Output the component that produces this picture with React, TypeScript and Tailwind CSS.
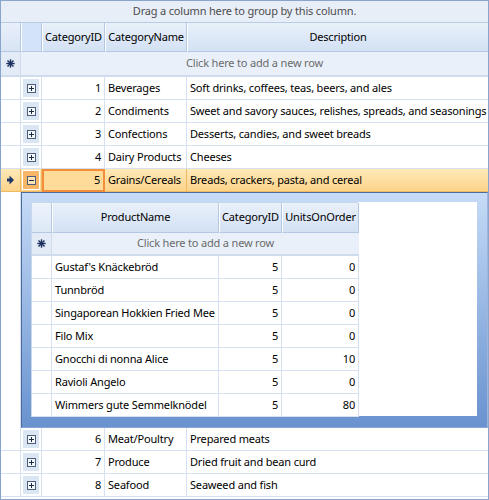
import React from 'react'

const categories = [
  { id: 1, name: 'Beverages', desc: 'Soft drinks, coffees, teas, beers, and ales' },
  { id: 2, name: 'Condiments', desc: 'Sweet and savory sauces, relishes, spreads, and seasonings' },
  { id: 3, name: 'Confections', desc: 'Desserts, candies, and sweet breads' },
  { id: 4, name: 'Dairy Products', desc: 'Cheeses' },
  { id: 5, name: 'Grains/Cereals', desc: 'Breads, crackers, pasta, and cereal' },
  { id: 6, name: 'Meat/Poultry', desc: 'Prepared meats' },
  { id: 7, name: 'Produce', desc: 'Dried fruit and bean curd' },
  { id: 8, name: 'Seafood', desc: 'Seaweed and fish' },
]

const products = [
  { name: "Gustaf's Knäckebröd", cat: 5, units: 0 },
  { name: 'Tunnbröd', cat: 5, units: 0 },
  { name: 'Singaporean Hokkien Fried Mee', cat: 5, units: 0 },
  { name: 'Filo Mix', cat: 5, units: 0 },
  { name: 'Gnocchi di nonna Alice', cat: 5, units: 10 },
  { name: 'Ravioli Angelo', cat: 5, units: 0 },
  { name: 'Wimmers gute Semmelknödel', cat: 5, units: 80 },
]

const mainCols = 'grid grid-cols-[20px_21px_63px_82px_1fr]'
const detailCols = 'grid grid-cols-[20px_167px_63px_77px] w-[327px]'

function Star() {
  return (
    <svg width="9" height="9" viewBox="0 0 9 9">
      <g stroke="#1c3160" strokeWidth="1.4" strokeLinecap="square">
        <line x1="4.5" y1="1" x2="4.5" y2="8" />
        <line x1="1" y1="4.5" x2="8" y2="4.5" />
        <line x1="2" y1="2" x2="7" y2="7" />
        <line x1="7" y1="2" x2="2" y2="7" />
      </g>
    </svg>
  )
}

function Arrow() {
  return (
    <svg width="7" height="10" viewBox="0 0 7 10">
      <polygon points="0,3.5 2.5,3.5 2.5,0.5 7,5 2.5,9.5 2.5,6.5 0,6.5" fill="#1f3767" />
    </svg>
  )
}

function ExpandBox({ open }: { open?: boolean }) {
  return (
    <svg width="9" height="9" viewBox="0 0 9 9">
      <rect x="0.5" y="0.5" width="8" height="8" fill={open ? '#fde3b8' : '#f4f8fd'} stroke="#4f5d78" />
      <line x1="2" y1="4.5" x2="7" y2="4.5" stroke="#1d2a44" />
      {!open && <line x1="4.5" y1="2" x2="4.5" y2="7" stroke="#1d2a44" />}
    </svg>
  )
}

function MainRow({ c, selected }: { c: (typeof categories)[number]; selected?: boolean }) {
  const line = selected ? 'border-[#f1b862]' : 'border-[#d5e1f1]'
  return (
    <div
      className={`${mainCols} h-[23px] ${
        selected ? 'bg-gradient-to-b from-[#fee9b8] to-[#fdd387]' : 'bg-white'
      }`}
    >
      <div className={`flex items-center justify-center border-r border-b ${line}`}>
        {selected && <Arrow />}
      </div>
      <div className={`border-r border-b ${line} p-px`}>
        <div
          className={`flex h-full items-center justify-center border border-white ${
            selected ? 'bg-[#f8b766]' : 'bg-[#dbe6f5]'
          }`}
        >
          <ExpandBox open={selected} />
        </div>
      </div>
      <div
        className={`flex items-center justify-end pr-[3px] ${
          selected ? 'border-2 border-[#f48e3a] bg-[#fddc9a]' : `border-r border-b ${line}`
        }`}
      >
        {c.id}
      </div>
      <div className={`flex items-center overflow-hidden whitespace-nowrap border-r border-b pl-[3px] ${line}`}>
        {c.name}
      </div>
      <div className={`flex items-center overflow-hidden whitespace-nowrap border-b pl-[3px] ${line}`}>
        {c.desc}
      </div>
    </div>
  )
}

function DetailGrid() {
  const hcell =
    'flex items-center justify-center border-r border-b border-[#b5c8e3] border-l border-l-white bg-gradient-to-b from-[#e9f0fa] to-[#d3e1f4]'
  return (
    <div className={`${detailCols} border-l border-t border-[#c9d7ea]`}>
      {/* header */}
      <div className="h-[30px] border-r border-b border-[#b5c8e3] bg-gradient-to-b from-[#edf3fb] to-[#dde8f6]" />
      <div className={hcell}>ProductName</div>
      <div className={hcell}>CategoryID</div>
      <div className={hcell}>UnitsOnOrder</div>
      {/* new row */}
      <div className="flex h-[23px] items-center justify-center border-r border-b-2 border-[#cfdcee] bg-[#e3ebf7]">
        <Star />
      </div>
      <div className="col-span-3 flex items-center justify-center border-b-2 border-[#cfdcee] bg-[#e9f0fa] text-[#6b6b6b]">
        Click here to add a new row
      </div>
      {products.map((p) => (
        <React.Fragment key={p.name}>
          <div className="h-[23px] border-r border-b border-[#d5e1f1]" />
          <div className="flex items-center overflow-hidden whitespace-nowrap border-r border-b border-[#d5e1f1] pl-[3px]">
            {p.name}
          </div>
          <div className="flex items-center justify-end border-r border-b border-[#d5e1f1] pr-[3px]">{p.cat}</div>
          <div className="flex items-center justify-end border-r border-b border-[#d5e1f1] pr-[3px]">{p.units}</div>
        </React.Fragment>
      ))}
    </div>
  )
}

export default function App() {
  const hcell =
    'flex items-center justify-center border-r border-b border-[#b5c8e3] border-l border-l-white bg-gradient-to-b from-[#e9f0fa] to-[#d3e1f4]'
  return (
    <div className="h-[500px] w-[489px] overflow-hidden border border-[#8aa5cb] bg-white font-['Noto_Sans',sans-serif] text-[11px] tracking-[-0.18px] text-black">
      {/* Group panel */}
      <div className="flex h-[22px] items-center justify-center border-b border-[#b8cbe5] bg-[#e8eef8] text-[#4d4d4d]">
        Drag a column here to group by this column.
      </div>

      {/* Header */}
      <div className={`${mainCols} h-[29px]`}>
        <div className="border-r border-b border-[#b5c8e3] bg-gradient-to-b from-[#e8effa] to-[#d8e4f4]" />
        <div className="border-r border-b border-[#b5c8e3] border-l border-l-white bg-[#d4e4f8]" />
        <div className={hcell}>CategoryID</div>
        <div className={hcell}>CategoryName</div>
        <div className={`${hcell} border-r-0`}>Description</div>
      </div>

      {/* New row */}
      <div className={`${mainCols} h-[25px]`}>
        <div className="flex items-center justify-center border-r border-b-2 border-[#cfdcee] bg-[#e3ebf7]">
          <Star />
        </div>
        <div className="col-span-4 flex items-center justify-center border-b-2 border-[#cfdcee] bg-[#e9f0fa] text-[#6b6b6b]">
          Click here to add a new row
        </div>
      </div>

      {categories.slice(0, 5).map((c) => (
        <MainRow key={c.id} c={c} selected={c.id === 5} />
      ))}

      {/* Detail for Grains/Cereals */}
      <div className="flex h-[236px]">
        <div className="w-[20px] border-r border-[#d5e1f1] bg-white" />
        <div className="flex-1 border-t border-l border-r border-b border-t-[#4d6a9a] border-l-[#4d6a9a] border-r-[#9cb6de] border-b-[#88a6d4] bg-gradient-to-b from-[#c6dbf6] to-[#6992cf] pt-[9px] pr-[10px] pb-[11px] pl-[9px]">
          <div className="h-full bg-white">
            <DetailGrid />
          </div>
        </div>
      </div>

      {categories.slice(5).map((c) => (
        <MainRow key={c.id} c={c} />
      ))}
    </div>
  )
}
